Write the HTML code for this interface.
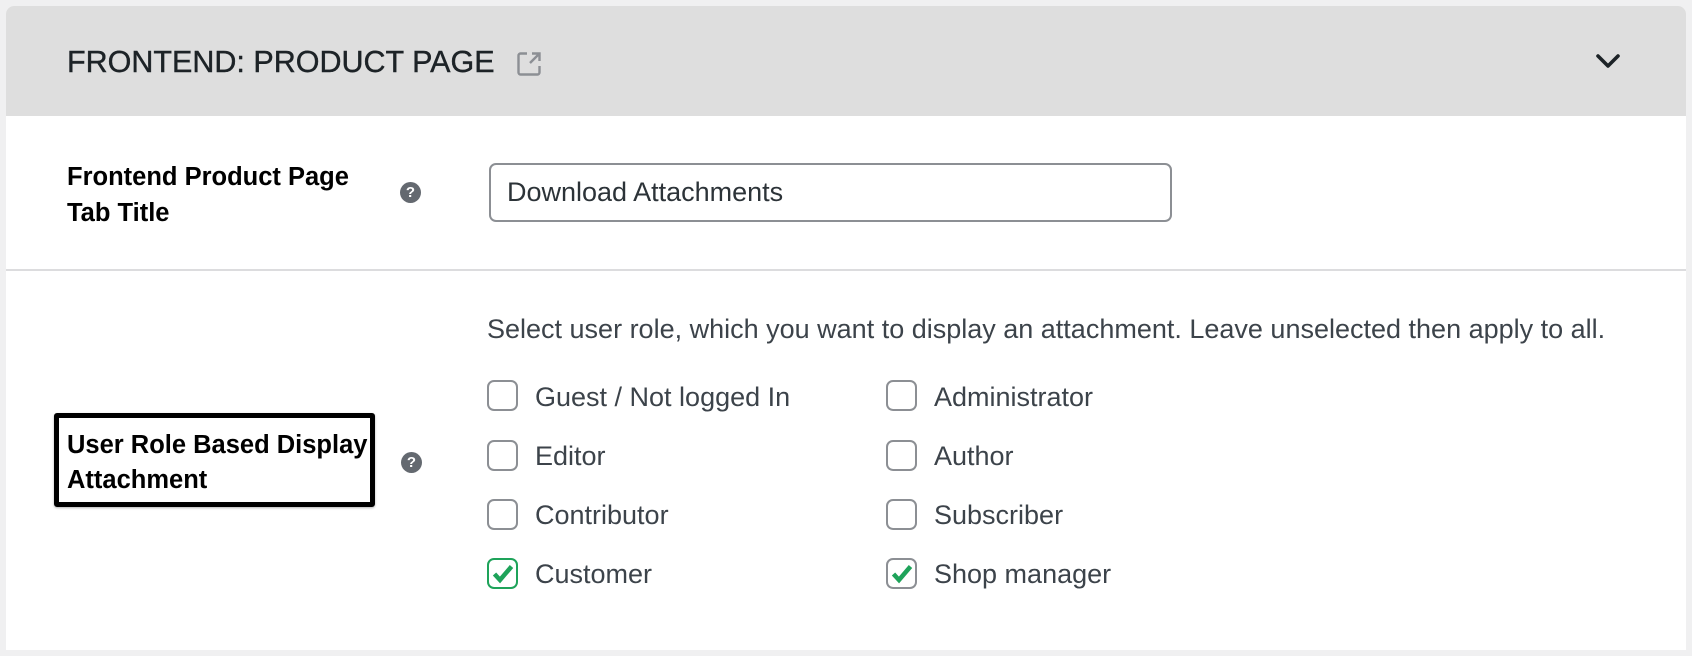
<!DOCTYPE html>
<html><head><meta charset="utf-8"><style>
*{box-sizing:border-box;margin:0;padding:0}
body{width:1692px;height:656px;background:#f0f0f1;font-family:"Liberation Sans",sans-serif;position:relative;overflow:hidden}
.panel{position:absolute;left:6px;top:6px;width:1680px;height:644px;background:#fff;border-radius:8px 8px 0 0;overflow:hidden}
.hdr{position:absolute;left:0;top:0;width:100%;height:110px;background:#dedede}
.t{position:absolute;font-size:30.5px;color:#1d2327;left:61px;top:39px;white-space:nowrap;-webkit-text-stroke:0.4px #1d2327}
.abs{position:absolute;white-space:nowrap}
.lbl{font-size:25.5px;font-weight:bold;color:#000;line-height:36px}
.help{position:absolute;width:21px;height:21px;border-radius:50%;background:#646970;color:#fff;font-size:15px;font-weight:bold;text-align:center;line-height:21px}
.inp{position:absolute;left:483px;top:157px;width:683px;height:59px;border:2px solid #8c8f94;border-radius:7px;font-size:27px;color:#2c3338;padding-left:16px;line-height:55px}
.div{position:absolute;left:0;top:263px;width:100%;height:2px;background:#dcdcde}
.txt{font-size:27px;color:#3c434a}
.cb{position:absolute;width:31px;height:31px;border:2px solid #8c8f94;border-radius:7px;background:#fff}
.cb.g{border-color:#1ea35a}
.cb svg{position:absolute;left:3px;top:4px}
</style></head><body>
<div class="panel">
 <div class="hdr"></div>
 <div class="t">FRONTEND: PRODUCT PAGE</div>
 <svg class="abs" style="left:510px;top:45px" width="26" height="26" viewBox="0 0 26 26" fill="none" stroke="#8c8f94" stroke-width="2.4"><path d="M11 2.5H4.5a2 2 0 0 0-2 2v17a2 2 0 0 0 2 2h17a2 2 0 0 0 2-2V15"/><path d="M14 12L23 3M16 2.5h7.5V10"/></svg>
 <svg class="abs" style="left:1589px;top:47px" width="26" height="16" viewBox="0 0 26 16" fill="none" stroke="#1d2327" stroke-width="3.6" stroke-linecap="round" stroke-linejoin="round"><path d="M3 3l10 10 10-10"/></svg>

 <div class="abs lbl" style="left:61px;top:153px">Frontend Product Page<br>Tab Title</div>
 <div class="help" style="left:394px;top:176px">?</div>
 <div class="inp">Download Attachments</div>
 <div class="div"></div>

 <div class="abs txt" style="left:481px;top:308px">Select user role, which you want to display an attachment. Leave unselected then apply to all.</div>

 <div class="abs" style="left:48px;top:407px;width:321px;height:94px;border:5px solid #000;border-radius:3px;box-shadow:0 1px 2px rgba(0,0,0,.3)"></div>
 <div class="abs lbl" style="left:61px;top:422px;line-height:35px">User Role Based Display<br>Attachment</div>
 <div class="help" style="left:395px;top:446px">?</div>

 <div class="cb" style="left:481px;top:374px"></div><div class="abs txt" style="left:529px;top:376px">Guest / Not logged In</div>
 <div class="cb" style="left:481px;top:434px"></div><div class="abs txt" style="left:529px;top:435px">Editor</div>
 <div class="cb" style="left:481px;top:493px"></div><div class="abs txt" style="left:529px;top:494px">Contributor</div>
 <div class="cb g" style="left:481px;top:552px"><svg width="22" height="20" viewBox="0 0 22 20"><path d="M2.5 10l5.5 6L19.5 2.5" fill="none" stroke="#1ea35a" stroke-width="4.5"/></svg></div><div class="abs txt" style="left:529px;top:553px">Customer</div>

 <div class="cb" style="left:880px;top:374px"></div><div class="abs txt" style="left:928px;top:376px">Administrator</div>
 <div class="cb" style="left:880px;top:434px"></div><div class="abs txt" style="left:928px;top:435px">Author</div>
 <div class="cb" style="left:880px;top:493px"></div><div class="abs txt" style="left:928px;top:494px">Subscriber</div>
 <div class="cb" style="left:880px;top:552px"><svg width="22" height="20" viewBox="0 0 22 20"><path d="M2.5 10l5.5 6L19.5 2.5" fill="none" stroke="#1ea35a" stroke-width="4.5"/></svg></div><div class="abs txt" style="left:928px;top:553px">Shop manager</div>
</div>
</body></html>
